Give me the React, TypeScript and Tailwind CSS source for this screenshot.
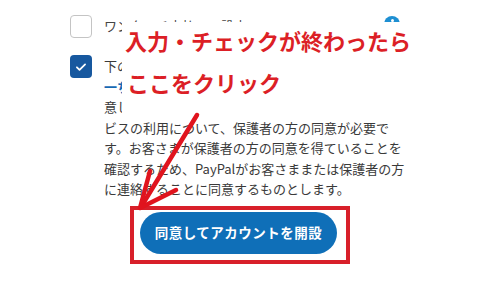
import React from 'react';

const jp = { fontFamily: '"Noto Sans CJK JP", "Noto Sans", sans-serif' };

const paragraph = [
  'ビスの利用について、保護者の方の同意が必要で',
  'す。お客さまが保護者の方の同意を得ていることを',
  '確認するため、PayPalがお客さままたは保護者の方',
  'に連絡することに同意するものとします。',
];

const CheckIcon = () => (
  <svg width="14" height="14" viewBox="0 0 24 24" fill="none" stroke="white" strokeWidth="3" strokeLinecap="round" strokeLinejoin="round">
    <path d="M5 12.5l4.5 4.5L19 7.5" />
  </svg>
);

export default function App() {
  return (
    <div className="relative w-[500px] h-[288px] bg-white overflow-hidden" style={jp}>
      <div className="pt-[15px] pl-[70px] pr-[100px]">
        <div className="flex items-start">
          <div className="w-[22px] h-[23px] rounded-[4px] border-[1.5px] border-[#c4c4c4] bg-white shrink-0" />
          <div className="ml-[12px] mt-[1px] text-[13px] leading-[20px] text-[#444] whitespace-nowrap">
            ワンタッチ支払いの設定
          </div>
          <div className="ml-auto mt-[1px] w-[16px] h-[7px] overflow-hidden">
            <div className="w-[16px] h-[16px] rounded-full bg-[#1e8fd2] flex justify-center pt-[3px]">
              <div className="w-[3px] h-[3px] rounded-full bg-white" />
            </div>
          </div>
        </div>

        <div className="flex items-start mt-[19px]">
          <div className="w-[22px] h-[23px] rounded-[4px] bg-[#17589f] flex items-center justify-center shrink-0 mt-[-2px]">
            <CheckIcon />
          </div>
          <div className="ml-[12px] mt-[-1px] text-[13px] leading-[20.5px] text-[#3a3a3a] whitespace-nowrap">
            <div>下の「同意してアカウントを開設」ボタンをクリック</div>
            <div className="text-[#1769b3] font-bold">一ちらの規約に同意したものとみなされます</div>
            <div>意したものとします。</div>
            {paragraph.map((line) => (
              <div key={line}>{line}</div>
            ))}
          </div>
        </div>

        <div className="mt-[6px] ml-[60px] w-[220px] h-[58px] border-[4px] border-[#d8202a] pl-[6px] pt-[2px]">
          <button className="w-[197px] h-[42px] rounded-full bg-[#0f6fb8] text-white text-[13.5px] font-bold tracking-[0.5px]">
            同意してアカウントを開設
          </button>
        </div>
      </div>

      <div className="absolute left-[122px] top-[22px] w-[293px] h-[95px] bg-white text-[#dc1f26] font-bold text-[22px] leading-[30px] whitespace-nowrap">
        <div className="pl-[3px] pt-[3px]">入力・チェックが終わったら</div>
        <div className="pl-[5px] mt-[12px]">ここをクリック</div>
      </div>

      <svg className="absolute left-0 top-0" width="500" height="288" viewBox="0 0 500 288" fill="none">
        <g stroke="#e0141e" strokeWidth="4.5" strokeLinecap="round" strokeLinejoin="round">
          <path d="M197 115L141 207" />
          <path d="M150 171L140 208L176 190" />
        </g>
      </svg>
    </div>
  );
}
